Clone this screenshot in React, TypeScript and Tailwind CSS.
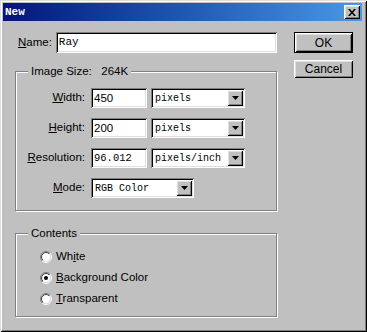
import React from 'react';

const raised =
  'shadow-[inset_1px_1px_0_#fff,inset_-1px_-1px_0_#000,inset_2px_2px_0_#dfdfdf,inset_-2px_-2px_0_#808080]';
const sunken =
  'shadow-[inset_1px_1px_0_#808080,inset_-1px_-1px_0_#fff,inset_2px_2px_0_#000,inset_-2px_-2px_0_#dfdfdf]';

function Label({ text, hot, className }: { text: string; hot: number; className?: string }) {
  return (
    <span className={className}>
      {text.slice(0, hot)}
      <span className="underline underline-offset-[1px]">{text.charAt(hot)}</span>
      {text.slice(hot + 1)}
    </span>
  );
}

function Field({ value, width, mono }: { value: string; width: string; mono?: boolean }) {
  return (
    <div className={`${width} h-[20px] bg-white ${sunken} flex items-center pl-[3px] pt-px`}>
      <span className={mono ? "font-['Liberation_Mono'] text-[10.5px]" : 'text-[11.5px]'}>{value}</span>
    </div>
  );
}

function Select({ value, width }: { value: string; width: string }) {
  return (
    <div className={`${width} h-[20px] bg-white ${sunken} flex items-center p-[2px]`}>
      <span className="flex-1 pl-[2px] pt-px font-['Liberation_Mono'] text-[10px] leading-none">{value}</span>
      <div className={`w-[16px] h-[16px] bg-[#c0c0c0] ${raised} flex items-center justify-center`}>
        <svg width="7" height="4" viewBox="0 0 7 4">
          <path d="M0 0h7L3.5 4z" fill="#000" />
        </svg>
      </div>
    </div>
  );
}

function Radio({ checked, id }: { checked?: boolean; id: string }) {
  return (
    <svg width="12" height="12" viewBox="0 0 12 12">
      <defs>
        <linearGradient id={`o${id}`} x1="0" y1="0" x2="1" y2="1">
          <stop offset="0.5" stopColor="#808080" />
          <stop offset="0.5" stopColor="#fff" />
        </linearGradient>
        <linearGradient id={`i${id}`} x1="0" y1="0" x2="1" y2="1">
          <stop offset="0.5" stopColor="#404040" />
          <stop offset="0.5" stopColor="#dfdfdf" />
        </linearGradient>
      </defs>
      <circle cx="6" cy="6" r="5.5" fill="none" stroke={`url(#o${id})`} />
      <circle cx="6" cy="6" r="4.5" fill="#fff" stroke={`url(#i${id})`} />
      {checked && <circle cx="6" cy="6" r="2" fill="#000" />}
    </svg>
  );
}

function Group({ title, className, children }: { title: string; className: string; children: React.ReactNode }) {
  return (
    <div className={`relative w-[262px] border border-[#808080] shadow-[inset_1px_1px_0_#fff,1px_1px_0_#fff] ${className}`}>
      <span className="absolute -top-[8px] left-[12px] bg-[#c0c0c0] px-[3px] text-[11.5px] leading-[14px] whitespace-pre">
        {title}
      </span>
      {children}
    </div>
  );
}

function Row({ label, hot, children }: { label: string; hot: number; children: React.ReactNode }) {
  return (
    <div className="flex items-center h-[20px]">
      <Label text={label} hot={hot} className="w-[72px] pr-[3px] text-right text-[11.5px]" />
      <div className="ml-[3px] flex gap-[4px]">{children}</div>
    </div>
  );
}

export default function App() {
  return (
    <div className="w-[367px] h-[332px] bg-[#c0c0c0] pt-[3px] pl-[3px] text-black font-['Liberation_Sans'] shadow-[inset_1px_1px_0_#dfdfdf,inset_-1px_-1px_0_#000,inset_2px_2px_0_#fff,inset_-2px_-2px_0_#808080]">
      <div className="w-[359px] h-[18px] bg-gradient-to-r from-[#08127a] to-[#4a98e8] flex items-center pl-[2px] pr-[2px]">
        <span className="flex-1 font-['Liberation_Mono'] font-bold text-[11px] text-white">New</span>
        <div className={`w-[16px] h-[14px] bg-[#c0c0c0] ${raised} flex items-center justify-center`}>
          <svg width="8" height="7" viewBox="0 0 8 7">
            <path d="M0 0h2l2 2.5L6 0h2L5 3.5 8 7H6L4 4.5 2 7H0l3-3.5z" fill="#000" />
          </svg>
        </div>
      </div>

      <div className="flex pt-[11px]">
        <div className="w-[274px] pl-[12px]">
          <div className="flex items-center h-[21px]">
            <Label text="Name:" hot={0} className="w-[41px] pl-[3px] text-[11.5px]" />
            <div className={`w-[222px] h-[21px] bg-white ${sunken} flex items-center pl-[3px]`}>
              <span className="font-['Liberation_Mono'] text-[11px]">Ray</span>
            </div>
          </div>

          <Group title={'Image Size:   264K'} className="mt-[18px] h-[140px] pt-[16px]">
            <div className="flex flex-col gap-[10px]">
              <Row label="Width:" hot={0}>
                <Field value="450" width="w-[56px]" />
                <Select value="pixels" width="w-[94px]" />
              </Row>
              <Row label="Height:" hot={0}>
                <Field value="200" width="w-[56px]" />
                <Select value="pixels" width="w-[94px]" />
              </Row>
              <Row label="Resolution:" hot={0}>
                <Field value="96.012" width="w-[56px]" mono />
                <Select value="pixels/inch" width="w-[94px]" />
              </Row>
              <Row label="Mode:" hot={0}>
                <Select value="RGB Color" width="w-[103px]" />
              </Row>
            </div>
          </Group>

          <Group title="Contents" className="mt-[22px] h-[84px] pt-[13px] pl-[24px]">
            <div className="flex flex-col gap-px">
              {[
                { t: 'White', h: 2, c: false },
                { t: 'Background Color', h: 0, c: true },
                { t: 'Transparent', h: 0, c: false },
              ].map((r, i) => (
                <div key={r.t} className="flex items-center h-[20px] gap-[4px]">
                  <Radio checked={r.c} id={String(i)} />
                  <Label text={r.t} hot={r.h} className="text-[11.5px]" />
                </div>
              ))}
            </div>
          </Group>
        </div>

        <div className="ml-[17px] flex flex-col gap-[7px]">
          <div className="w-[59px] h-[21px] border border-black">
            <div className={`w-full h-full ${raised} flex items-center justify-center text-[12px]`}>OK</div>
          </div>
          <div className={`w-[59px] h-[18px] ${raised} flex items-center justify-center text-[12px]`}>Cancel</div>
        </div>
      </div>
    </div>
  );
}
